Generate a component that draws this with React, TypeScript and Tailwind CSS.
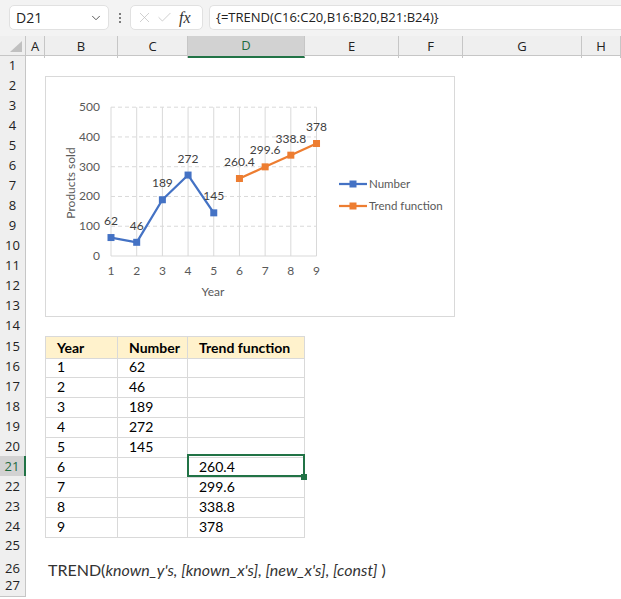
import { ChevronDown, X, Check } from "lucide-react";

const cols = ["A", "B", "C", "D", "E", "F", "G", "H"];

const table: Record<number, [string, string, string]> = {
  15: ["Year", "Number", "Trend function"],
  16: ["1", "62", ""],
  17: ["2", "46", ""],
  18: ["3", "189", ""],
  19: ["4", "272", ""],
  20: ["5", "145", ""],
  21: ["6", "", "260.4"],
  22: ["7", "", "299.6"],
  23: ["8", "", "338.8"],
  24: ["9", "", "378"],
};

const gridCols = "grid grid-cols-[26px_19px_73px_70px_117px_94px_64px_119px_1fr]";

const xAt = (i: number) => 66 + (i - 1) * 25.69;
const yAt = (v: number) => 180 - v * 0.2976;

const known = [62, 46, 189, 272, 145];
const trend = [260.4, 299.6, 338.8, 378];

function Chart() {
  const blue = "#4472c4";
  const orange = "#ed7d31";
  const text = "#595959";
  const bluePts = known.map((v, i) => [xAt(i + 1), yAt(v)] as const);
  const orangePts = trend.map((v, i) => [xAt(i + 6), yAt(v)] as const);
  return (
    <div className="absolute left-[45px] top-[76px] h-[241px] w-[410px] bg-white">
      <svg width="410" height="241" className="block font-[Lato,Calibri,sans-serif]">
        <rect x="0.5" y="0.5" width="409" height="240" fill="white" stroke="#d9d9d9" />
        {[100, 200, 300, 400, 500].map((v) => (
          <line key={v} x1={xAt(1)} x2={xAt(9)} y1={yAt(v)} y2={yAt(v)} stroke="#d9d9d9" strokeDasharray="4 3" />
        ))}
        {[1, 2, 3, 4, 5, 6, 7, 8, 9].map((i) => (
          <line key={i} x1={xAt(i)} x2={xAt(i)} y1={yAt(500)} y2={yAt(0)} stroke="#d9d9d9" />
        ))}
        <line x1={xAt(1)} x2={xAt(9)} y1={yAt(0)} y2={yAt(0)} stroke="#d9d9d9" />
        {[0, 100, 200, 300, 400, 500].map((v) => (
          <text key={v} x="55" y={yAt(v) + 4} textAnchor="end" fontSize="12" fill={text}>
            {v}
          </text>
        ))}
        {[1, 2, 3, 4, 5, 6, 7, 8, 9].map((i) => (
          <text key={i} x={xAt(i)} y="199" textAnchor="middle" fontSize="12" fill={text}>
            {i}
          </text>
        ))}
        <text x="168" y="220" textAnchor="middle" fontSize="12" fill={text}>
          Year
        </text>
        <text transform="translate(30,107) rotate(-90)" textAnchor="middle" fontSize="12" fill={text}>
          Products sold
        </text>

        <polyline points={bluePts.map((p) => p.join(",")).join(" ")} fill="none" stroke={blue} strokeWidth="2.25" strokeLinejoin="round" />
        <polyline points={orangePts.map((p) => p.join(",")).join(" ")} fill="none" stroke={orange} strokeWidth="2.25" strokeLinejoin="round" />
        {bluePts.map(([x, y], i) => (
          <rect key={i} x={x - 3.5} y={y - 3.5} width="7" height="7" fill={blue} />
        ))}
        {orangePts.map(([x, y], i) => (
          <rect key={i} x={x - 3.5} y={y - 3.5} width="7" height="7" fill={orange} />
        ))}
        {known.map((v, i) => (
          <text key={i} x={xAt(i + 1)} y={yAt(v) - 12.5} textAnchor="middle" fontSize="12" fill="#404040">
            {v}
          </text>
        ))}
        {trend.map((v, i) => (
          <text key={i} x={xAt(i + 6)} y={yAt(v) - 12.5} textAnchor="middle" fontSize="12" fill="#404040">
            {v}
          </text>
        ))}

        <line x1="294" x2="322" y1="108" y2="108" stroke={blue} strokeWidth="2.25" />
        <rect x="304.5" y="104.5" width="7" height="7" fill={blue} />
        <text x="324" y="112" fontSize="11.5" fill={text}>
          Number
        </text>
        <line x1="294" x2="322" y1="130" y2="130" stroke={orange} strokeWidth="2.25" />
        <rect x="304.5" y="126.5" width="7" height="7" fill={orange} />
        <text x="324" y="134" fontSize="11.5" fill={text}>
          Trend function
        </text>
      </svg>
    </div>
  );
}

function Toolbar() {
  return (
    <div className="flex h-[36px] items-start bg-[#f3f3f3] pt-[5px]">
      <div className="ml-[9px] flex h-[25px] w-[100px] items-center justify-between rounded-[5px] border border-[#e1e1e1] bg-white pl-[6px] pr-[5px] text-[14px] text-[#222] font-['Open_Sans',sans-serif]">
        <span>D21</span>
        <ChevronDown size={14} strokeWidth={1.5} className="text-[#444]" />
      </div>
      <div className="ml-[8px] flex h-[25px] w-[6px] flex-col items-center justify-center gap-[2px]">
        <span className="h-[2px] w-[2px] rounded-full bg-[#555]" />
        <span className="h-[2px] w-[2px] rounded-full bg-[#555]" />
        <span className="h-[2px] w-[2px] rounded-full bg-[#555]" />
      </div>
      <div className="ml-[7px] flex h-[25px] w-[73px] items-center rounded-[5px] border border-[#e1e1e1] bg-white pl-[5px]">
        <X size={17} strokeWidth={1} className="text-[#bdbdbd]" />
        <Check size={17} strokeWidth={1} className="ml-[3px] text-[#bdbdbd]" />
        <span className="ml-[6px] font-['Liberation_Serif',serif] text-[16px] italic leading-none text-[#333]">fx</span>
      </div>
      <div className="ml-[6px] flex h-[25px] flex-1 items-center rounded-l-[5px] border border-r-0 border-[#e1e1e1] bg-white pl-[6px] font-['Open_Sans',sans-serif] text-[13px] text-[#222]">
        {"{=TREND(C16:C20,B16:B20,B21:B24)}"}
      </div>
    </div>
  );
}

function HeaderRow() {
  return (
    <div className={`${gridCols} h-[20px] border-b border-[#c6c6c6] bg-[#efefef] font-['Open_Sans',sans-serif] text-[13px] text-[#222]`}>
      <div className="relative border-r border-[#c6c6c6]">
        <svg width="26" height="20" className="absolute left-0 top-0">
          <polygon points="10,16 22,16 22,5" fill="#c0c0c0" />
        </svg>
      </div>
      {cols.map((c) =>
        c === "D" ? (
          <div key={c} className="flex items-center justify-center border-b-2 border-r border-b-[#217346] border-r-[#c6c6c6] bg-[#d2d2d2] text-[#1e6b3f]">
            {c}
          </div>
        ) : (
          <div key={c} className="flex items-center justify-center border-r border-[#c6c6c6]">
            {c}
          </div>
        )
      )}
    </div>
  );
}

function Row({ n }: { n: number }) {
  const data = table[n];
  const selected = n === 21;
  const cell = "flex items-center pl-[11px] border-r border-b border-[#d9d9d9]";
  return (
    <div className={`${gridCols} h-[20px]`}>
      <div
        className={
          selected
            ? "flex items-center justify-center border-b border-r-2 border-b-[#c6c6c6] border-r-[#217346] bg-[#d2d2d2] font-['Open_Sans',sans-serif] text-[13px] text-[#1e6b3f]"
            : "flex items-center justify-center border-b border-r border-[#c6c6c6] bg-[#efefef] font-['Open_Sans',sans-serif] text-[13px] text-[#222]"
        }
      >
        {n}
      </div>
      <div />
      {data ? (
        <>
          <div className={`${cell} border-l ${n === 15 ? "border-t bg-[#fff2cc] font-bold" : ""}`}>{data[0]}</div>
          <div className={`${cell} ${n === 15 ? "border-t bg-[#fff2cc] font-bold" : ""}`}>{data[1]}</div>
          <div className={`${cell} relative ${n === 15 ? "border-t bg-[#fff2cc] font-bold" : ""}`}>
            {data[2]}
            {selected && (
              <>
                <div className="absolute -left-[1px] -right-[1px] -top-[2px] bottom-0 border-2 border-[#217346]" />
                <div className="absolute -bottom-[3px] -right-[3px] z-10 h-[6px] w-[6px] bg-[#217346]" />
              </>
            )}
          </div>
        </>
      ) : n === 26 ? (
        <div className="col-span-6 flex items-center pl-[3px] pt-[2px] text-[16px] text-[#333]">
          <span>
            TREND(<i>known_y's, [known_x's], [new_x's], [const]</i> )
          </span>
        </div>
      ) : null}
    </div>
  );
}

export default function App() {
  const rows = Array.from({ length: 27 }, (_, i) => i + 1);
  return (
    <div className="relative h-[599px] w-[621px] overflow-hidden bg-white font-[Lato,Calibri,sans-serif] text-[14px] text-black">
      <Toolbar />
      <HeaderRow />
      {rows.map((n) => (
        <Row key={n} n={n} />
      ))}
      <Chart />
    </div>
  );
}
